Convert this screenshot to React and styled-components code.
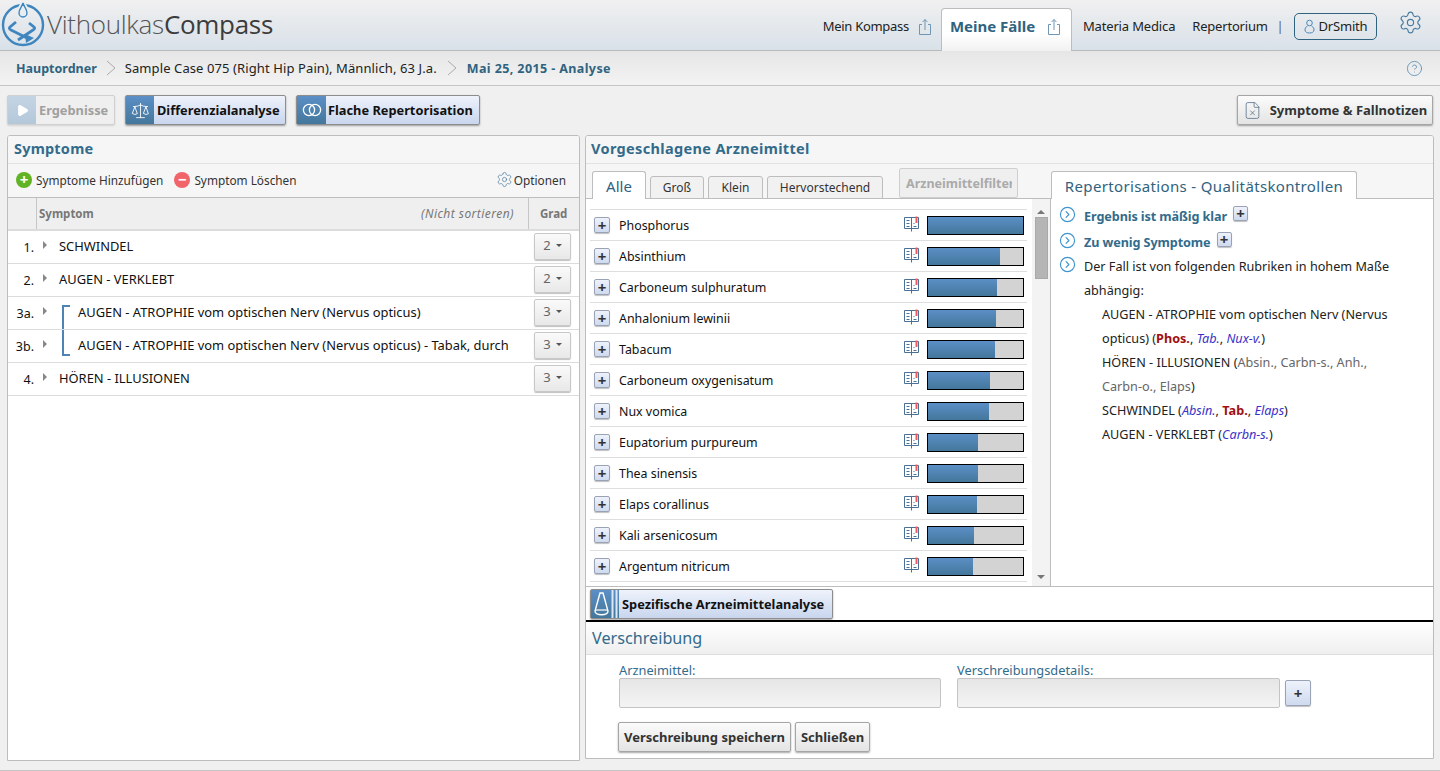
import React from 'react';
import styled, { createGlobalStyle } from 'styled-components';
import { Settings, CircleHelp, Scale, CircleChevronRight, FileX, Play } from 'lucide-react';

const GlobalStyle = createGlobalStyle`
  html, body { margin:0; padding:0; height:771px; overflow:hidden; }
  body { background:#f0f0f0; font-family:"Noto Sans","Liberation Sans",sans-serif; font-size:13px; color:#111; }
  * { box-sizing:border-box; }
`;

const Page = styled.div`
  display:flex;
  flex-direction:column;
  height:771px;
  border-bottom:1px solid #c4c4c4;
  padding-bottom:1px;
`;
const Header = styled.header`
  display:flex;
  align-items:flex-end;
  justify-content:space-between;
  height:51px;
  flex:none;
  padding-right:17px;
  border-bottom:1px solid #b9b9b9;
  background:linear-gradient(to bottom,#f0f0f0,#d9e1e9);
`;
const Logo = styled.div`
  display:flex;
  align-items:center;
  align-self:center;
  gap:1px;
  margin-left:1px;
  font-family:"Open Sans",sans-serif;
  font-size:26px;
  letter-spacing:-.3px;
  color:#555;
`;
const LogoLight = styled.span`font-weight:300;`;
const LogoBold = styled.span`font-weight:400;color:#3c3c3c;`;
const LogoText = styled.span`margin-top:-2px;`;
const Nav = styled.nav`
  display:flex;
  align-items:flex-start;
  height:42px;
`;
const NavLink = styled.div`
  display:flex;
  align-items:center;
  gap:9px;
  height:36px;
  margin-right:${p => p.$mr || 0}px;
  color:#222;
  white-space:nowrap;
  letter-spacing:${p => p.$ls ?? -.3}px;
`;
const ActiveTab = styled.div`
  display:flex;
  align-items:center;
  justify-content:space-between;
  width:131px;
  height:43px;
  margin:0 11px 0 9px;
  padding:0 10px 8px 8px;
  position:relative;
  border:1px solid #bdbdbd;
  border-bottom:none;
  border-radius:4px 4px 0 0;
  background:linear-gradient(to bottom,#fff 60%,#f1f1f1);
  color:#2f6380;
  font-size:15px;
  font-weight:700;
`;
const NavSep = styled.span`
  margin:0 11px 0 9px;
  color:#555;
  font-size:12px;
`;
const UserButton = styled.div`
  display:flex;
  align-items:center;
  justify-content:center;
  gap:4px;
  width:83px;
  height:27px;
  border:1px solid #2f6380;
  border-radius:5px;
  color:#222;
  letter-spacing:-.2px;
`;
const GearWrap = styled.div`
  display:flex;
  margin-left:21px;
  margin-top:2px;
  color:#4a7ba0;
`;
const Breadcrumb = styled.div`
  display:flex;
  align-items:center;
  height:35px;
  flex:none;
  padding:0 17px 0 16px;
  border-bottom:1px solid #c6c6c6;
  background:linear-gradient(to bottom,#e6e6e6,#f3f3f3);
`;
const Crumb = styled.span`
  color:${p => p.$strong ? '#2f6380' : '#222'};
  font-weight:${p => p.$strong ? 700 : 400};
  font-size:${p => p.$strong ? 12.5 : 13}px;
  letter-spacing:${p => p.$ls || 0}px;
  white-space:nowrap;
`;
const Chevron = styled.svg`
  width:12px;
  height:16px;
  margin:0 ${p => p.$mx || 8}px;
  fill:none;
  stroke:#aaa;
`;
const HelpWrap = styled.div`
  margin-left:auto;
  display:flex;
  color:#5d8fb2;
`;
const Toolbar = styled.div`
  display:flex;
  align-items:center;
  gap:10px;
  height:49px;
  flex:none;
  padding:0 7px 1px;
`;
const IconButton = styled.div`
  display:flex;
  align-items:stretch;
  height:30px;
  width:${p => p.$w}px;
  border:1px solid ${p => p.$off ? '#d0d0d0' : '#8d8d8d'};
  border-radius:2px;
  box-shadow:0 1px 2px rgba(0,0,0,${p => p.$off ? .12 : .35});
  background:linear-gradient(to bottom,#eef2fb,#c9d6ee);
  font-weight:700;
  font-size:12.8px;
  white-space:nowrap;
  ${p => p.$off && 'background:#efefef;color:#a0a0a0;'}
`;
const ButtonIcon = styled.span`
  display:flex;
  align-items:center;
  justify-content:center;
  width:${p => p.$w || 28}px;
  flex:none;
  color:#fff;
  background:${p => p.$off ? 'linear-gradient(to bottom,#c4d4e4,#b4c8da)' : 'linear-gradient(to bottom,#5b8fc6,#44779b)'};
`;
const ButtonText = styled.span`
  align-self:center;
  padding-left:${p => p.$pl ?? 3}px;
`;
const PlainButton = styled.div`
  display:flex;
  align-items:center;
  justify-content:center;
  gap:${p => p.$gap || 0}px;
  height:30px;
  width:${p => p.$w}px;
  margin-left:${p => p.$ml || 0};
  border:1px solid #a5a5a5;
  border-radius:2px;
  box-shadow:0 1px 2px rgba(0,0,0,.35);
  background:linear-gradient(to bottom,#fbfbfb,#e4e4e4);
  color:#333;
  font-weight:700;
  font-size:13px;
  white-space:nowrap;
`;
const Content = styled.main`
  display:grid;
  grid-template-columns:573px 849px;
  gap:5px;
  padding:0 7px;
  height:626px;
  flex:none;
`;
const Panel = styled.section`
  display:flex;
  flex-direction:column;
  background:#fff;
  border:1px solid #bdbdbd;
  border-radius:3px 3px 0 0;
  overflow:hidden;
  height:${p => p.$h}px;
`;
const PanelTitle = styled.h2`
  margin:0;
  height:28px;
  flex:none;
  padding:2px 5px 0 ${p => p.$pl ?? 6}px;
  background:#f6f6f6;
  border-bottom:1px solid #e2e2e2;
  color:#336b8b;
  font-size:14.5px;
  font-weight:700;
  letter-spacing:${p => p.$ls || 0}px;
  line-height:20px;
`;
const SymptomBar = styled.div`
  display:flex;
  align-items:center;
  height:34px;
  flex:none;
  padding:0 13px 2px 8px;
  background:#f6f6f6;
  border-bottom:1px solid #bdbdbd;
  font-size:11.8px;
`;
const BarAction = styled.div`
  display:flex;
  align-items:center;
  gap:${p => p.$gap ?? 4}px;
  margin-right:${p => p.$mr || 0}px;
  margin-left:${p => p.$ml || 0};
  color:#333;
`;
const RoundIcon = styled.span`
  display:flex;
  align-items:center;
  justify-content:center;
  width:16px;
  height:16px;
  border-radius:50%;
  background:${p => p.$c};
  color:#fff;
  font-size:15px;
  font-weight:700;
  line-height:1;
`;
const TableHead = styled.div`
  display:grid;
  grid-template-columns:28px 1fr 51px;
  height:33px;
  flex:none;
  background:#efefef;
  border-bottom:2px solid #dcdcdc;
  color:#777;
  font-size:11.5px;
  font-weight:700;
`;
const HeadCell = styled.div`
  display:flex;
  align-items:center;
  justify-content:space-between;
  padding:0 ${p => p.$pr ?? 14}px 0 ${p => p.$pl ?? 2}px;
  border-left:${p => p.$line ? '1px solid #c6c6c6' : 'none'};
`;
const NotSorted = styled.span`
  font-weight:400;
  font-style:italic;
  font-size:12px;
  letter-spacing:.45px;
`;
const SymptomRow = styled.div`
  display:flex;
  align-items:center;
  height:33px;
  flex:none;
  border-bottom:1px solid #dcdcdc;
`;
const RowNumber = styled.span`
  width:26px;
  margin-top:1px;
  text-align:right;
  flex:none;
  font-size:12.5px;
`;
const Caret = styled.span`
  width:0;
  height:0;
  flex:none;
  margin:-4px 0 0 9px;
  border-left:4px solid #888;
  border-top:4px solid transparent;
  border-bottom:4px solid transparent;
`;
const Bracket = styled.span`
  align-self:stretch;
  flex:none;
  width:8px;
  margin:${p => p.$first ? '8px 0 0 15px' : '0 0 6px 15px'};
  border-left:2px solid #4f82b5;
  border-top:${p => p.$first ? '2px solid #4f82b5' : 'none'};
  border-bottom:${p => p.$first ? 'none' : '2px solid #4f82b5'};
`;
const RowText = styled.span`
  flex:1;
  padding:0 0 2px ${p => p.$nested ? 8 : 12}px;
  font-size:12.9px;
  white-space:nowrap;
`;
const GradeButton = styled.div`
  display:flex;
  align-items:center;
  justify-content:center;
  gap:5px;
  width:37px;
  height:27px;
  margin:-2px 8px 0 0;
  padding-bottom:2px;
  border:1px solid #c8c8c8;
  border-radius:2px;
  background:linear-gradient(to bottom,#fafafa,#e8e8e8);
  box-shadow:0 1px 1px rgba(0,0,0,.25);
  color:#666;
`;
const DownCaret = styled.span`
  width:0;
  height:0;
  border-top:3px solid #555;
  border-left:3px solid transparent;
  border-right:3px solid transparent;
`;
const TabsRow = styled.div`
  display:flex;
  align-items:flex-end;
  height:35px;
  flex:none;
  padding-left:6px;
  background:#f6f6f6;
  border-bottom:1px solid #bdbdbd;
`;
const Tab = styled.div`
  display:flex;
  align-items:center;
  justify-content:center;
  width:${p => p.$w}px;
  height:${p => p.$active ? 28 : 23}px;
  margin-right:${p => p.$mr ?? 4}px;
  margin-bottom:-1px;
  border:1px solid #bdbdbd;
  border-bottom:${p => p.$active ? 'none' : '1px solid #bdbdbd'};
  border-radius:3px 3px 0 0;
  background:${p => p.$active ? '#fff' : '#f1f1f1'};
  color:${p => p.$active ? '#2f6380' : '#333'};
  font-size:${p => p.$active ? 15 : 12}px;
  white-space:nowrap;
  position:relative;
`;
const FilterButton = styled.div`
  width:119px;
  height:30px;
  margin:0 33px 0 16px;
  align-self:flex-end;
  padding:6px 5px 0 6px;
  border:1px solid #cfcfcf;
  border-radius:2px;
  background:#efefef;
  color:#aaa;
  font-weight:700;
  font-size:12.5px;
`;
const FilterLabel = styled.span`
  display:block;
  overflow:hidden;
  white-space:nowrap;
`;
const QualityTab = styled(Tab)`
  font-size:15px;
  letter-spacing:.35px;
`;
const SplitArea = styled.div`
  display:grid;
  grid-template-columns:465px 1fr;
  height:388px;
  flex:none;
  border-bottom:1px solid #bdbdbd;
`;
const ListSide = styled.div`
  display:grid;
  grid-template-columns:1fr 18px;
  border-right:1px solid #bdbdbd;
  overflow:hidden;
`;
const RemedyList = styled.div`
  padding:10px 5px 0 4px;
`;
const RemedyRow = styled.div`
  display:flex;
  align-items:center;
  height:${p => p.$first ? 32 : 31}px;
  padding-left:4px;
  border-top:${p => p.$first ? '1px solid #dedede' : 'none'};
  border-bottom:1px solid #dedede;
`;
const PlusButton = styled.span`
  display:flex;
  align-items:center;
  justify-content:center;
  flex:none;
  width:${p => p.$s || 16}px;
  height:${p => p.$s || 16}px;
  border:1px solid #9aa3b5;
  border-radius:2px;
  background:linear-gradient(to bottom,#eef2fb,#cfdaef);
  box-shadow:0 1px 1px rgba(0,0,0,.25);
  color:#333;
  font-size:15px;
  font-weight:700;
  line-height:1;
`;
const RemedyName = styled.span`
  flex:1;
  padding-left:9px;
  font-size:12.4px;
`;
const BookSvg = styled.svg`
  width:17px;
  height:16px;
  margin:-2px 7px 0 0;
  fill:none;
  stroke:#4b7096;
`;
const Meter = styled.div`
  width:97px;
  height:19px;
  margin-right:3px;
  border:1px solid #000;
  background:#d3d3d3;
`;
const MeterFill = styled.div`
  height:100%;
  background:linear-gradient(to bottom,#5b8fc6,#44779b);
`;
const Scrollbar = styled.div`
  display:flex;
  flex-direction:column;
  align-items:center;
  background:#f3f3f3;
  padding-top:11px;
`;
const ScrollArrow = styled.span`
  width:0;
  height:0;
  border-left:4px solid transparent;
  border-right:4px solid transparent;
  border-${p => p.$down ? 'top' : 'bottom'}:4px solid #777;
  margin-top:${p => p.$down ? 'auto' : 0};
  margin-bottom:${p => p.$down ? '7px' : 0};
`;
const ScrollThumb = styled.div`
  width:13px;
  height:62px;
  margin-top:3px;
  background:#b5b5b5;
  border:1px solid #a9a9a9;
`;
const Quality = styled.div`
  padding:5px 20px 0 8px;
  font-size:12.65px;
  line-height:24px;
`;
const QualityItem = styled.div`
  display:flex;
  align-items:flex-start;
  gap:8px;
  color:${p => p.$strong ? '#336b8b' : '#222'};
  font-weight:${p => p.$strong ? 700 : 400};
  letter-spacing:${p => p.$strong ? -.1 : 0}px;
  min-height:${p => p.$h || 24}px;
`;
const QualityMark = styled.span`
  display:flex;
  flex:none;
  margin-top:2px;
  color:#3e94cf;
`;
const QualityText = styled.span`
  display:inline-flex;
  align-items:flex-start;
  gap:6px;
`;
const PlusOffset = styled.span`
  margin-top:2px;
`;
const Rubrics = styled.div`
  padding-left:25px;
`;
const RubricLine = styled.div`
  padding-left:18px;
  color:#222;
`;
const Strong = styled.b`color:#a01010;`;
const Em = styled.i`color:#3a32c8;`;
const Muted = styled.span`color:#666;`;
const ActionRow = styled.div`
  display:flex;
  align-items:center;
  height:35px;
  flex:none;
  padding:1px 0 0 4px;
  border-bottom:2px solid #000;
`;
const ScaleBlock = styled.span`
  display:flex;
  flex:none;
  width:28px;
  background:linear-gradient(to bottom,#5b8fc6,#44779b);
`;
const SectionTitle = styled.h3`
  margin:0;
  height:33px;
  flex:none;
  padding:5px 6px 0;
  border-bottom:1px solid #dedede;
  background:linear-gradient(to bottom,#fff,#efefef);
  color:#336b8b;
  font-size:16.2px;
  font-weight:400;
  line-height:22px;
`;
const FormGrid = styled.div`
  display:grid;
  grid-template-columns:322px 323px 26px;
  column-gap:16px;
  padding:8px 0 0 33px;
`;
const Field = styled.label`
  display:flex;
  flex-direction:column;
  color:#336b8b;
  font-size:12.8px;
  line-height:15px;
`;
const FakeInput = styled.div`
  height:30px;
  border:1px solid #c4c4c4;
  border-radius:2px;
  background:linear-gradient(to bottom,#e6e6e6,#f4f4f4);
`;
const FieldPlus = styled.div`
  align-self:end;
  margin:0 0 2px -11px;
`;
const FormButtons = styled.div`
  display:flex;
  gap:4px;
  padding:14px 0 0 32px;
`;

const Upload = () => (
  <svg width="14" height="17" viewBox="0 0 14 17" fill="none" stroke="#6f97b5">
    <path d="M4 6.5H1.5v10h11v-10H10" />
    <path d="M7 12V1.5M4.6 4 7 1.5 9.4 4" />
  </svg>
);

const Crest = () => (
  <svg width="45" height="46" viewBox="0 0 45 46" fill="none" stroke="#3f86bf">
    <circle cx="22" cy="23" r="20" strokeWidth="2.4" />
    <path d="M22 1c-1 4-4 6-4 10a4 4 0 0 0 8 0c0-4-3-6-4-10z" stroke="#e9eef2" strokeWidth="5" />
    <path d="M22 1c-1 4-4 6-4 10a4 4 0 0 0 8 0c0-4-3-6-4-10z" strokeWidth="1.4" />
    <path d="M15 20l-6 5c-1 1-1 2 1 3l16 8" strokeWidth="2.8" />
    <path d="M28 21l5 4c1 1 1 2-1 3L17 38" strokeWidth="2.8" />
    <path d="M24 32l9 4-8 5z" fill="#3f86bf" stroke="none" />
  </svg>
);

const Book = () => (
  <BookSvg viewBox="0 0 17 16">
    <path d="M1.500 1.500h14v11h-14zM8.500 1.500v14" />
    <path d="M3.500 4.500h3M3.500 7.500h3M3.500 10.500h3M10.500 7.500h1M10.500 10.500h3" />
    <path d="M13.500 .5v6.500" stroke="#f05a5f" strokeWidth="2" />
  </BookSvg>
);

const Chev = ({ mx }) => (
  <Chevron $mx={mx} viewBox="0 0 12 16"><path d="M2 1l8 7-8 7" /></Chevron>
);

const Rings = () => (
  <svg width="20" height="14" viewBox="0 0 20 14" fill="none" stroke="#fff" strokeWidth="1.3">
    <circle cx="7" cy="7" r="5.6" />
    <circle cx="13" cy="7" r="5.6" />
  </svg>
);

const UserGlyph = () => (
  <svg width="11" height="15" viewBox="0 0 11 15" fill="none" stroke="#4a89bb">
    <circle cx="5.500" cy="4" r="2.800" />
    <path d="M3.500 7C1.500 8 1 9.500 1 11c0 2 2 3 4.500 3S10 13 10 11c0-1.500-.5-3-2.500-4" />
  </svg>
);

const Flask = () => (
  <svg width="28" height="28" viewBox="0 0 28 28" fill="none" stroke="#fff">
    <path d="M9 3h3l5 18c0 5-13 5-13 0z" strokeWidth="1.400" />
    <path d="M4 20h13" strokeWidth="1.200" />
    <path d="M21.500 0v28M25.500 0v28" stroke="#dce8f5" strokeWidth="2" />
  </svg>
);

const symptoms = [
  { n: '1.', text: 'SCHWINDEL', grade: 2 },
  { n: '2.', text: 'AUGEN - VERKLEBT', grade: 2 },
  { n: '3a.', text: 'AUGEN - ATROPHIE vom optischen Nerv (Nervus opticus)', grade: 3, bracket: 'first' },
  { n: '3b.', text: 'AUGEN - ATROPHIE vom optischen Nerv (Nervus opticus) - Tabak, durch', grade: 3, bracket: 'last' },
  { n: '4.', text: 'HÖREN - ILLUSIONEN', grade: 3 },
];

const remedies = [
  ['Phosphorus', 100], ['Absinthium', 76], ['Carboneum sulphuratum', 73], ['Anhalonium lewinii', 72],
  ['Tabacum', 70], ['Carboneum oxygenisatum', 65], ['Nux vomica', 64], ['Eupatorium purpureum', 53],
  ['Thea sinensis', 53], ['Elaps corallinus', 52], ['Kali arsenicosum', 48], ['Argentum nitricum', 47],
];

const App = () => (
  <Page>
    <GlobalStyle />
    <Header>
      <Logo>
        <Crest />
        <LogoText><LogoLight>Vithoulkas</LogoLight><LogoBold>Compass</LogoBold></LogoText>
      </Logo>
      <Nav>
        <NavLink>Mein Kompass <Upload /></NavLink>
        <ActiveTab>Meine Fälle <Upload /></ActiveTab>
        <NavLink $mr={17} $ls={-.15}>Materia Medica</NavLink>
        <NavLink $ls={-.2}>Repertorium</NavLink>
        <NavLink><NavSep>|</NavSep></NavLink>
        <NavLink><UserButton><UserGlyph />DrSmith</UserButton></NavLink>
        <GearWrap><Settings size={25} strokeWidth={1.1} /></GearWrap>
      </Nav>
    </Header>
    <Breadcrumb>
      <Crumb $strong>Hauptordner</Crumb>
      <Chev mx={8} />
      <Crumb $ls={.1}>Sample Case 075 (Right Hip Pain), Männlich, 63 J.a.</Crumb>
      <Chev mx={9} />
      <Crumb $strong $ls={.4}>Mai 25, 2015 - Analyse</Crumb>
      <HelpWrap><CircleHelp size={17} strokeWidth={1.2} /></HelpWrap>
    </Breadcrumb>
    <Toolbar>
      <IconButton $w={108} $off>
        <ButtonIcon $off><Play size={13} fill="#fff" stroke="#fff" /></ButtonIcon>
        <ButtonText>Ergebnisse</ButtonText>
      </IconButton>
      <IconButton $w={161}>
        <ButtonIcon><Scale size={19} strokeWidth={1.1} /></ButtonIcon>
        <ButtonText>Differenzialanalyse</ButtonText>
      </IconButton>
      <IconButton $w={184}>
        <ButtonIcon $w={29}><Rings /></ButtonIcon>
        <ButtonText $pl={2}>Flache Repertorisation</ButtonText>
      </IconButton>
      <PlainButton $w={196} $ml="auto" $gap={8}>
        <FileX size={19} strokeWidth={1} color="#56708a" />
        Symptome &amp; Fallnotizen
      </PlainButton>
    </Toolbar>
    <Content>
      <Panel $h={626}>
        <PanelTitle $ls={.2}>Symptome</PanelTitle>
        <SymptomBar>
          <BarAction $mr={11}>
            <RoundIcon $c="#62b324">+</RoundIcon>Symptome Hinzufügen
          </BarAction>
          <BarAction>
            <RoundIcon $c="#f0646a">−</RoundIcon>Symptom Löschen
          </BarAction>
          <BarAction $ml="auto" $gap={1}>
            <Settings size={17} strokeWidth={1} color="#4c7da0" />Optionen
          </BarAction>
        </SymptomBar>
        <TableHead>
          <div />
          <HeadCell $line>Symptom<NotSorted>(Nicht sortieren)</NotSorted></HeadCell>
          <HeadCell $line $pl={11} $pr={0}>Grad</HeadCell>
        </TableHead>
        {symptoms.map(s => (
          <SymptomRow key={s.n}>
            <RowNumber>{s.n}</RowNumber>
            <Caret />
            {s.bracket && <Bracket $first={s.bracket === 'first'} />}
            <RowText $nested={!!s.bracket}>{s.text}</RowText>
            <GradeButton>{s.grade}<DownCaret /></GradeButton>
          </SymptomRow>
        ))}
      </Panel>
      <Panel $h={624}>
        <PanelTitle $ls={.35} $pl={5}>Vorgeschlagene Arzneimittel</PanelTitle>
        <TabsRow>
          <Tab $w={54} $active>Alle</Tab>
          <Tab $w={54}>Groß</Tab>
          <Tab $w={55}>Klein</Tab>
          <Tab $w={116} $mr={0}>Hervorstechend</Tab>
          <FilterButton><FilterLabel>Arzneimittelfilter</FilterLabel></FilterButton>
          <QualityTab $w={306} $active>Repertorisations - Qualitätskontrollen</QualityTab>
        </TabsRow>
        <SplitArea>
          <ListSide>
            <RemedyList>
              {remedies.map(([name, pct], i) => (
                <RemedyRow key={name} $first={i === 0}>
                  <PlusButton>+</PlusButton>
                  <RemedyName>{name}</RemedyName>
                  <Book />
                  <Meter><MeterFill style={{ width: `${pct}%` }} /></Meter>
                </RemedyRow>
              ))}
            </RemedyList>
            <Scrollbar>
              <ScrollArrow />
              <ScrollThumb />
              <ScrollArrow $down />
            </Scrollbar>
          </ListSide>
          <Quality>
            <QualityItem $strong $h={26}>
              <QualityMark><CircleChevronRight size={17} strokeWidth={1.6} /></QualityMark>
              <QualityText>Ergebnis ist mäßig klar <PlusOffset><PlusButton $s={15}>+</PlusButton></PlusOffset></QualityText>
            </QualityItem>
            <QualityItem $strong>
              <QualityMark><CircleChevronRight size={17} strokeWidth={1.6} /></QualityMark>
              <QualityText>Zu wenig Symptome <PlusOffset><PlusButton $s={15}>+</PlusButton></PlusOffset></QualityText>
            </QualityItem>
            <QualityItem>
              <QualityMark><CircleChevronRight size={17} strokeWidth={1.6} /></QualityMark>
              <span>Der Fall ist von folgenden Rubriken in hohem Maße abhängig:</span>
            </QualityItem>
            <Rubrics>
              <RubricLine>AUGEN - ATROPHIE vom optischen Nerv (Nervus opticus) (<Strong>Phos.</Strong>, <Em>Tab.</Em>, <Em>Nux-v.</Em>)</RubricLine>
              <RubricLine>HÖREN - ILLUSIONEN (<Muted>Absin., Carbn-s., Anh.,<br />Carbn-o., Elaps</Muted>)</RubricLine>
              <RubricLine>SCHWINDEL (<Em>Absin.</Em>, <Strong>Tab.</Strong>, <Em>Elaps</Em>)</RubricLine>
              <RubricLine>AUGEN - VERKLEBT (<Em>Carbn-s.</Em>)</RubricLine>
            </Rubrics>
          </Quality>
        </SplitArea>
        <ActionRow>
          <IconButton $w={243}>
            <ScaleBlock><Flask /></ScaleBlock>
            <ButtonText>Spezifische Arzneimittelanalyse</ButtonText>
          </IconButton>
        </ActionRow>
        <SectionTitle>Verschreibung</SectionTitle>
        <FormGrid>
          <Field>Arzneimittel:<FakeInput /></Field>
          <Field>Verschreibungsdetails:<FakeInput /></Field>
          <FieldPlus><PlusButton $s={26}>+</PlusButton></FieldPlus>
        </FormGrid>
        <FormButtons>
          <PlainButton $w={173}>Verschreibung speichern</PlainButton>
          <PlainButton $w={75}>Schließen</PlainButton>
        </FormButtons>
      </Panel>
    </Content>
  </Page>
);

export default App;
